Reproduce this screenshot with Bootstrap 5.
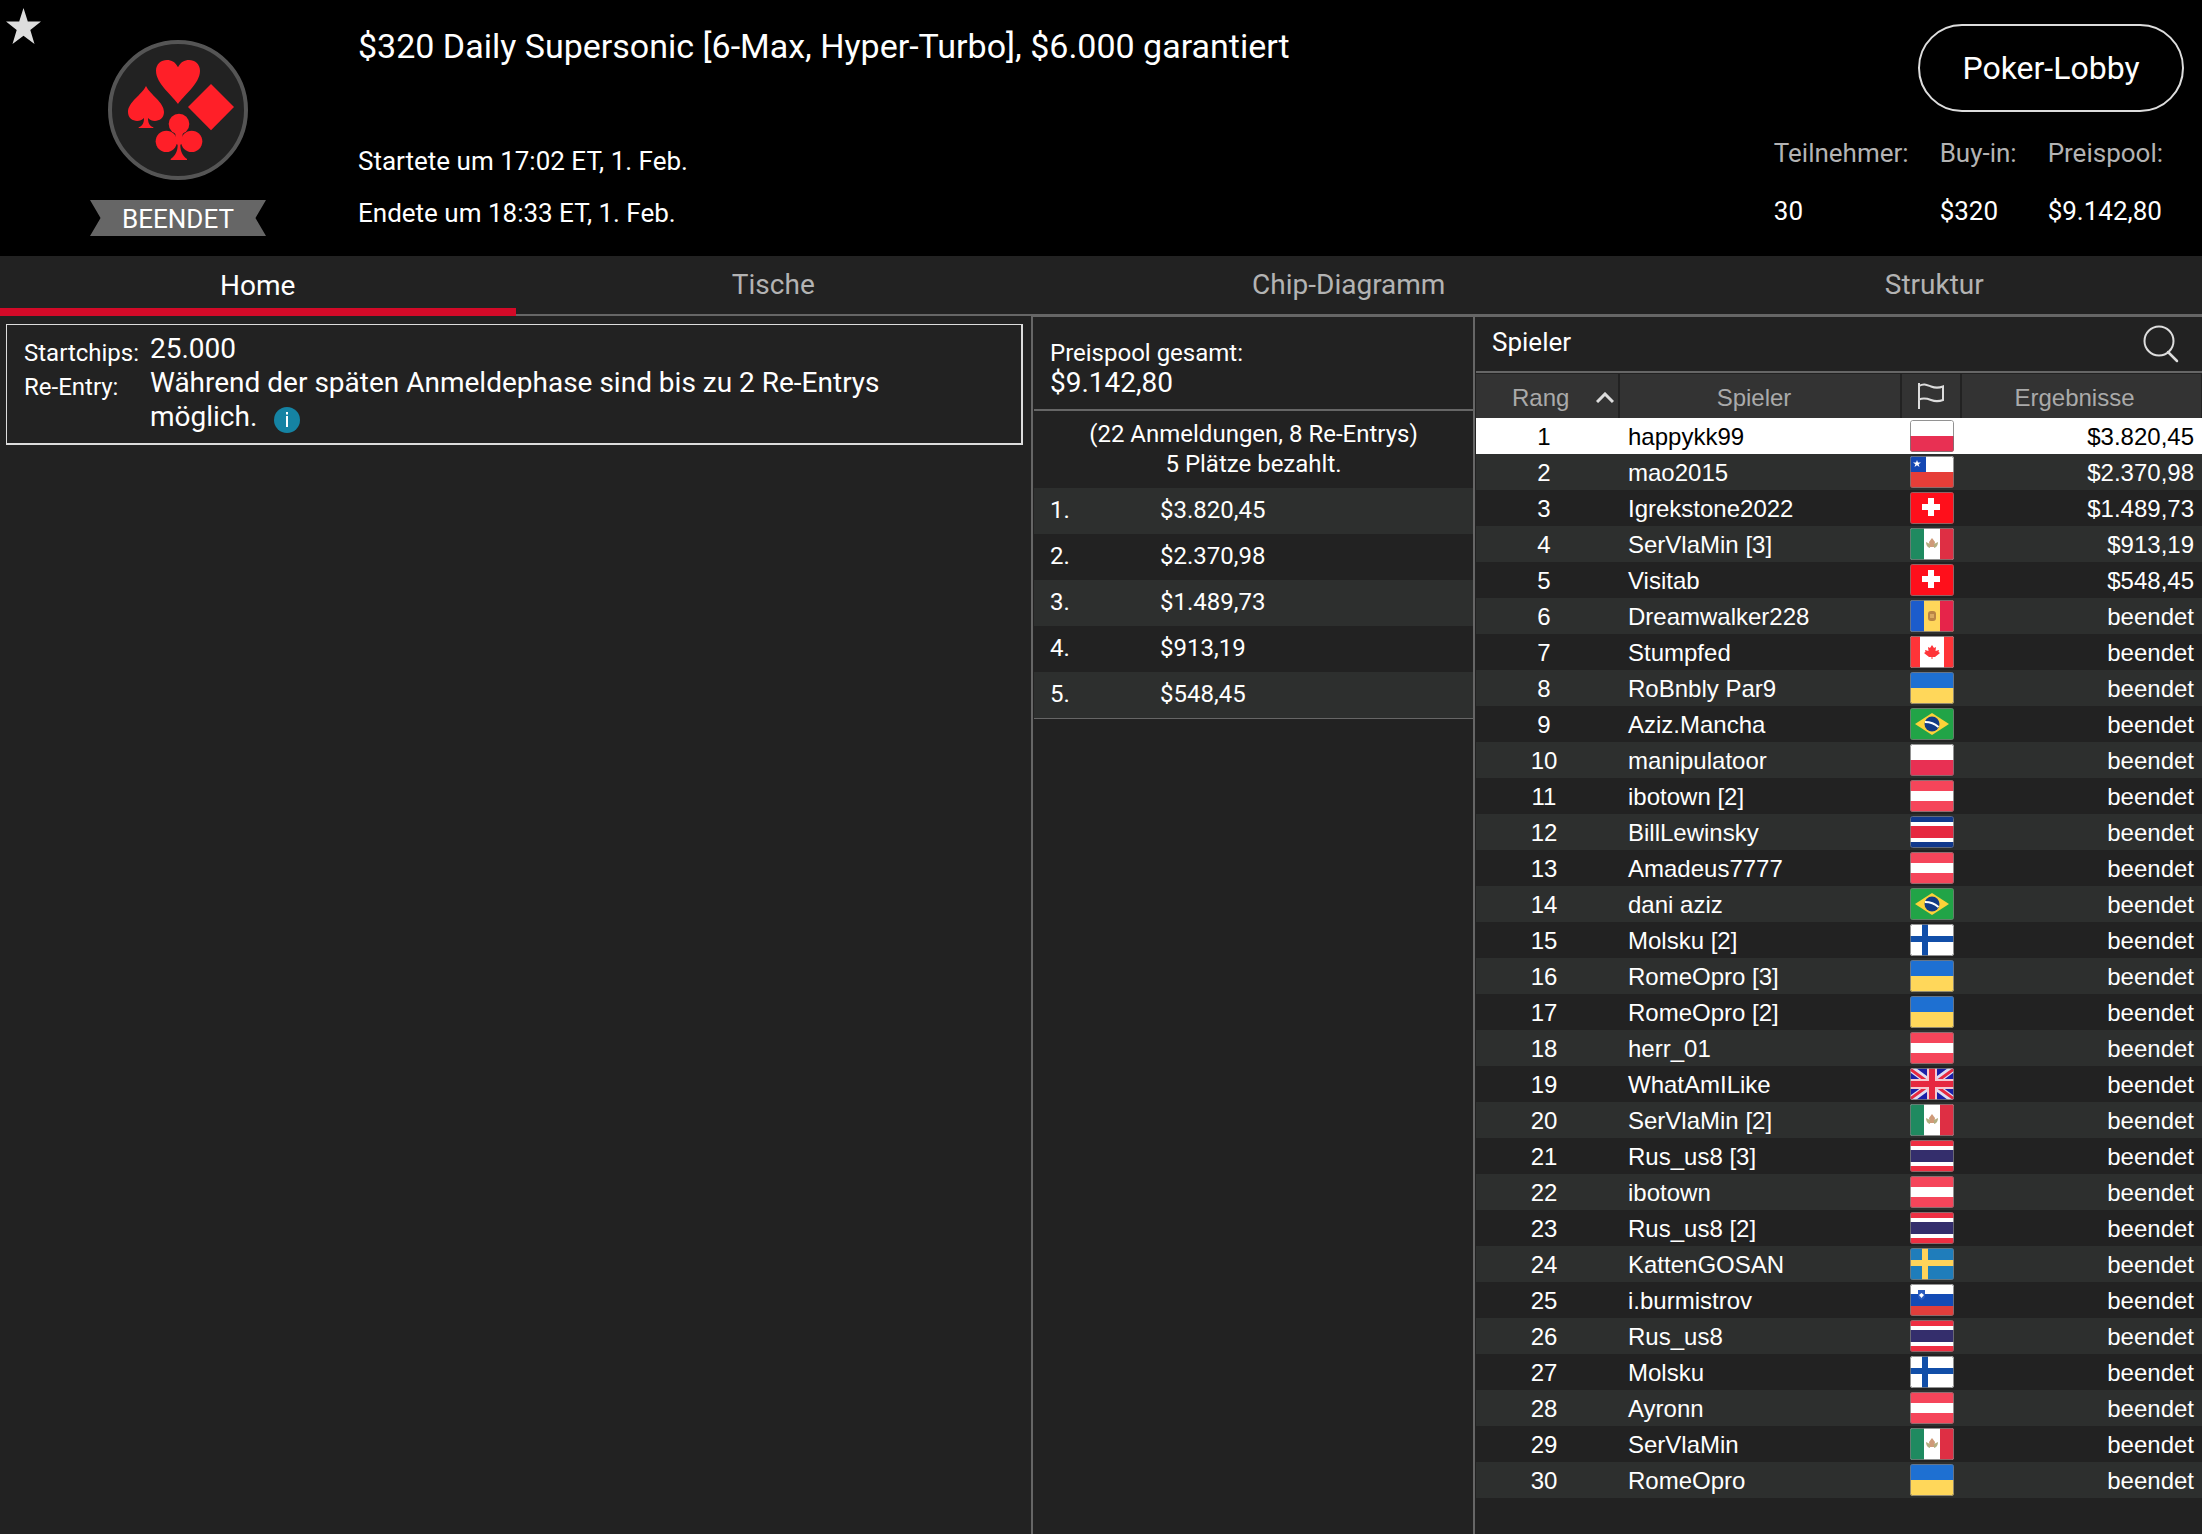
<!DOCTYPE html>
<html lang="de">
<head>
<meta charset="utf-8">
<meta name="viewport" content="width=device-width, initial-scale=1">
<title>Turnier-Lobby</title>
<link href="https://cdn.jsdelivr.net/npm/bootstrap@5.3.0/dist/css/bootstrap.min.css" rel="stylesheet">
<style>
  body { background: #222; color: #fff; font: 24px/30px Roboto, "Liberation Sans", sans-serif; }
  .icon-btn { background: none; border: 0; padding: 0; line-height: 0; color: #ddd; }
  .icon-btn svg, .suit-logo, .flag-pic { display: block; }

  /* Header */
  .lobby-head { background: #000; min-height: 256px; font-size: 26px; line-height: 32px; }
  .head-logo { width: 356px; padding-top: 40px; }
  .fav-btn { top: 8px; left: 6px; }
  .ribbon { width: 176px; height: 36px; margin-top: 20px; background: #666; line-height: 38px;
    clip-path: polygon(0 0, 100% 0, 94% 50%, 100% 100%, 0 100%, 6% 50%); }
  .head-info { padding: 26px 0 0 2px; }
  .head-title { font-size: 34px; line-height: 40px; font-weight: 400; margin-bottom: 79px; }
  .head-info p { margin-bottom: 20px; }
  .head-side { padding: 24px 18px 0 0; }
  .lobby-btn { width: 266px; height: 88px; border: 2px solid #ddd; font-size: 32px; color: #fff; background: #000; }
  .head-stats { gap: 31px; margin: 25px 21px 0 0; }
  .head-stats dt { font-weight: 400; color: #b3b3b3; margin-bottom: 26px; }

  /* Tabs */
  .lobby-tabs { border-bottom: 2px solid #666; flex-wrap: nowrap; }
  .lobby-tabs .nav-item { flex: 258 1 0; }
  .lobby-tabs .nav-item.grow-lg { flex-grow: 318; }
  .lobby-tabs .nav-item.grow-md { flex-grow: 268; }
  .lobby-tabs .nav-link { height: 58px; padding: 0; font-size: 28px; line-height: 58px; text-align: center; color: #b3b3b3; border-radius: 0; }
  .lobby-tabs .nav-link.active { height: 60px; line-height: 60px; margin-bottom: -2px; color: #fff; box-shadow: inset 0 -8px #d30a28; }

  /* Panels */
  .lobby-main { display: grid; grid-template-columns: minmax(0, 1fr) 442px 729px; }
  .info-box { margin: 8px 8px 0 6px; padding: 7px 16px 9px 17px; border: 1px solid #ddd; border-width: 1px 2px 2px 1px;
    display: grid; grid-template-columns: 126px 1fr; }
  .info-box dt { font-weight: 400; line-height: 26px; padding-top: 8px; }
  .info-box dd { margin: 0; padding-right: 96px; font-size: 28px; line-height: 34px; }
  .info-btn { margin-left: 10px; vertical-align: -7px; }
  .side-panel { border-left: 2px solid #666; border-top: 1px solid #666; padding-left: 1px; }
  .pool-total { padding: 21px 16px 11px; border-bottom: 2px solid #666; }
  .pool-total strong { font-weight: 400; font-size: 28px; }
  .pool-note { padding: 8px 0 9px; margin: 0; }
  .data-table { width: 100%; border-collapse: separate; border-spacing: 0; table-layout: fixed; }
  .payouts { border-bottom: 1px solid #666; }
  .payouts th { width: 126px; font-weight: 400; }
  .payouts th, .payouts td { padding: 0 0 2px 16px; line-height: 44px; }
  .payouts td { padding-left: 0; }
  .payouts tr:nth-child(odd) { background: #2d2f2e; }

  .players-head { height: 56px; padding: 0 23px 0 16px; border-bottom: 2px solid #666; margin-bottom: 1px; }
  .players-head h2 { font-size: 26px; line-height: 50px; padding-bottom: 4px; font-weight: 400; margin: 0; }
  .players { font-family: "Liberation Sans", Arial, sans-serif; }
  .players th { background: #333; color: #aaa; font-weight: 400; line-height: 41px; height: 44px; padding: 3px 12px 0 0; text-align: center; border-right: 2px solid #222; }
  .players th:last-child { border-right-width: 1px; padding-right: 14px; }
  .players th.icon-col { padding: 0; }
  .players th.icon-col svg { display: block; margin: auto; }
  .players th.sort-col { padding: 3px 4px 0 36px; }
  .sort-btn { background: none; border: 0; padding: 0; color: inherit; }
  .players td { height: 36px; line-height: 33px; padding: 2px 8px 1px; white-space: nowrap; }
  .players td:first-child { text-align: center; padding-right: 16px; }
  .players td:nth-child(3) { padding: 0; }
  .players td:last-child { text-align: right; }
  .players tbody tr:nth-child(even) { background: #2d2f2e; }
  .players tbody tr.picked { background: #fff; color: #000; }
  .flag-pic { width: 44px; height: 32px; margin: auto; border-radius: 3px; }
</style>
<script src="https://cdn.jsdelivr.net/npm/bootstrap@5.3.0/dist/js/bootstrap.bundle.min.js"></script>
</head>
<body class="min-vh-100 d-flex flex-column">

<svg width="0" height="0" class="position-absolute" aria-hidden="true">
  <defs>
    <g id="edge"><rect x=".5" y=".5" width="43" height="31" rx="2" fill="none" stroke="#777" stroke-opacity=".8"/></g>
    <symbol id="pl" viewBox="0 0 44 32"><path fill="#fff" d="M0 0h44v16H0z"/><path fill="#e83053" d="M0 16h44v16H0z"/><use href="#edge"/></symbol>
    <symbol id="cl" viewBox="0 0 44 32"><path fill="#fff" d="M0 0h44v16H0z"/><path fill="#e63e38" d="M0 16h44v16H0z"/><path fill="#1448b4" d="M0 0h16v16H0z"/><path fill="#fff" d="M7 4l1 2.500h3L8.600 8.200l.9 2.800L7 9.300 4.500 11l.9-2.800L3 6.500h3z"/><use href="#edge"/></symbol>
    <symbol id="ch" viewBox="0 0 44 32"><path fill="#ff0f1b" d="M0 0h44v32H0z"/><path fill="#fff" d="M18 6h6v6h6v6h-6v6h-6v-6h-6v-6h6z"/><use href="#edge"/></symbol>
    <symbol id="mx" viewBox="0 0 44 32"><path fill="#fff" d="M0 0h44v32H0z"/><path fill="#1f8a60" d="M0 0h14v32H0z"/><path fill="#de2f44" d="M30 0h14v32H30z"/><path fill="#cf9a78" d="M22 10l3 4-1 5h-4l-1-5z"/><path fill="#b3ae80" d="M16 14l4 2v4q-4-1-4-6zM28 14l-4 2v4q4-1 4-6z"/><use href="#edge"/></symbol>
    <symbol id="md" viewBox="0 0 44 32"><path fill="#ffd65a" d="M0 0h44v32H0z"/><path fill="#1c5ccc" d="M0 0h14v32H0z"/><path fill="#e6244a" d="M30 0h14v32H30z"/><rect x="18" y="11" width="8" height="10" rx="3" fill="#b98445"/><path fill="#d9a860" d="M20 14h4v4h-4z"/><use href="#edge"/></symbol>
    <symbol id="ca" viewBox="0 0 44 32"><path fill="#fff" d="M0 0h44v32H0z"/><path fill="#ff3438" d="M0 0h10v32H0zM34 0h10v32H34zM22 9l2 3 2-1-.5 4 3.500-1-.5 2 1.500 1-5 4h-2.500v2h-1v-2H19l-5-4 1.500-1-.5-2 3.500 1-.5-4 2 1z"/><use href="#edge"/></symbol>
    <symbol id="ua" viewBox="0 0 44 32"><path fill="#1e70d2" d="M0 0h44v16H0z"/><path fill="#ffd75a" d="M0 16h44v16H0z"/><use href="#edge"/></symbol>
    <symbol id="br" viewBox="0 0 44 32"><path fill="#21a447" d="M0 0h44v32H0z"/><path fill="#fbd239" d="M5 16L22 5l17 11-17 11z"/><circle cx="22" cy="16" r="7.500" fill="#143a84"/><path fill="none" stroke="#fff" stroke-width="2" d="M15 14q8 0 13.500 5"/><use href="#edge"/></symbol>
    <symbol id="at" viewBox="0 0 44 32"><path fill="#f5455a" d="M0 0h44v32H0z"/><path fill="#fff" d="M0 11h44v10H0z"/><use href="#edge"/></symbol>
    <symbol id="cr" viewBox="0 0 44 32"><path fill="#11398d" d="M0 0h44v32H0z"/><path fill="#fff" d="M0 6h44v20H0z"/><path fill="#e62840" d="M0 10h44v12H0z"/><use href="#edge"/></symbol>
    <symbol id="fi" viewBox="0 0 44 32"><path fill="#fff" d="M0 0h44v32H0z"/><path fill="#114ea8" d="M12 0h6v32h-6zM0 12h44v6H0z"/><use href="#edge"/></symbol>
    <symbol id="se" viewBox="0 0 44 32"><path fill="#1f7dbb" d="M0 0h44v32H0z"/><path fill="#ffd35a" d="M12 0h6v32h-6zM0 12h44v6H0z"/><use href="#edge"/></symbol>
    <symbol id="gb" viewBox="0 0 44 32"><path fill="#1a1fa8" d="M0 0h44v32H0z"/><path stroke="#fff" stroke-opacity=".85" stroke-width="7" d="M0 0l44 32M44 0L0 32"/><path stroke="#e62840" stroke-width="3" d="M0 1l22 16M44 1L22 17M0 31l22-16M44 31L22 15"/><path fill="#f6c8d0" d="M17 0h10v32H17zM0 11h44v10H0z"/><path fill="#e62840" d="M19 0h6v32h-6zM0 13h44v6H0z"/><use href="#edge"/></symbol>
    <symbol id="th" viewBox="0 0 44 32"><path fill="#ee2e42" d="M0 0h44v32H0z"/><path fill="#fff" d="M0 6h44v20H0z"/><path fill="#342e6c" d="M0 10h44v12H0z"/><use href="#edge"/></symbol>
    <symbol id="si" viewBox="0 0 44 32"><path fill="#fff" d="M0 0h44v10H0z"/><path fill="#134bb5" d="M0 10h44v12H0z"/><path fill="#e03e3b" d="M0 22h44v10H0z"/><path fill="#2a5cc0" d="M8 6h7v5q0 4-3.500 5Q8 15 8 11z"/><path fill="#fff" d="M9 11l2.500-2 2.500 2-2.500 3z"/><use href="#edge"/></symbol>
  </defs>
</svg>

<header class="lobby-head d-flex position-relative">
  <button class="icon-btn fav-btn position-absolute" type="button" aria-label="Favorit">
    <svg width="35" height="37" viewBox="0 0 35 37"><path fill="#ddd" d="M17.500 0l4.300 13.500H35L24.300 22l4.200 14-11-8.300L6.500 36l4.200-14L0 13.500h13.200z"/></svg>
  </button>
  <div class="head-logo d-flex flex-column align-items-center flex-shrink-0">
    <svg class="suit-logo" width="140" height="140" viewBox="84 30 420 420" aria-hidden="true">
      <circle cx="294" cy="240" r="204" fill="#222" stroke="#555" stroke-width="12"/>
      <g fill="#ff1f28">
        <path d="M294 222C280 198 228 162 228 122c0-38 52-44 66-10 14-34 66-28 66 10 0 40-52 76-66 100z"/>
        <path d="M393 162l69 69-69 70-69-70z"/>
        <path d="M198 168c12 26 54 48 54 78 0 28-34 34-48 18 0 14 4 24 16 28v2h-44v-2c12-4 16-14 16-28-14 16-48 10-48-18 0-30 42-52 54-78z"/>
        <circle cx="297" cy="282" r="31"/><circle cx="259" cy="334" r="32"/><circle cx="335" cy="334" r="32"/>
        <path d="M285 300h24l-2 22 10 14-16 8c0 20 6 32 20 43v3h-49v-3c14-11 21-23 21-43l-16-8 10-14z"/>
      </g>
    </svg>
    <div class="ribbon text-center">BEENDET</div>
  </div>
  <div class="head-info flex-grow-1">
    <h1 class="head-title">$320 Daily Supersonic [6-Max, Hyper-Turbo], $6.000 garantiert</h1>
    <p>Startete um 17:02 ET, 1. Feb.</p>
    <p class="mb-0">Endete um 18:33 ET, 1. Feb.</p>
  </div>
  <div class="head-side d-flex flex-column align-items-end">
    <button class="lobby-btn rounded-pill" type="button">Poker-Lobby</button>
    <div class="head-stats d-flex">
      <dl class="mb-0"><dt>Teilnehmer:</dt><dd class="mb-0">30</dd></dl>
      <dl class="mb-0"><dt>Buy-in:</dt><dd class="mb-0">$320</dd></dl>
      <dl class="mb-0"><dt>Preispool:</dt><dd class="mb-0">$9.142,80</dd></dl>
    </div>
  </div>
</header>

<nav aria-label="Turnier">
  <ul class="nav lobby-tabs">
    <li class="nav-item"><a class="nav-link active" aria-current="page" href="#home">Home</a></li>
    <li class="nav-item"><a class="nav-link" href="#tische">Tische</a></li>
    <li class="nav-item grow-lg"><a class="nav-link" href="#chips">Chip-Diagramm</a></li>
    <li class="nav-item grow-md"><a class="nav-link" href="#struktur">Struktur</a></li>
  </ul>
</nav>

<main class="lobby-main flex-grow-1" id="home">
  <section>
    <dl class="info-box mb-0">
      <dt>Startchips:</dt><dd>25.000</dd>
      <dt>Re-Entry:</dt>
      <dd>Während der späten Anmeldephase sind bis zu 2 Re-Entrys möglich.
        <button class="icon-btn info-btn" type="button" aria-label="Info"><svg width="26" height="26" viewBox="0 0 26 26"><circle cx="13" cy="13" r="13" fill="#1583a3"/><path fill="#fff" d="M12 5h2v2.500h-2zM12 9h2v11h-2z"/></svg></button>
      </dd>
    </dl>
  </section>

  <section class="side-panel">
    <div class="pool-total"><div>Preispool gesamt:</div><strong class="d-block">$9.142,80</strong></div>
    <p class="pool-note text-center">(22 Anmeldungen, 8 Re-Entrys)<br>5 Plätze bezahlt.</p>
    <table class="data-table payouts">
      <tbody>
        <tr><th scope="row">1.</th><td>$3.820,45</td></tr>
        <tr><th scope="row">2.</th><td>$2.370,98</td></tr>
        <tr><th scope="row">3.</th><td>$1.489,73</td></tr>
        <tr><th scope="row">4.</th><td>$913,19</td></tr>
        <tr><th scope="row">5.</th><td>$548,45</td></tr>
      </tbody>
    </table>
  </section>

  <section class="side-panel">
    <div class="players-head d-flex justify-content-between align-items-center">
      <h2>Spieler</h2>
      <button class="icon-btn" type="button" aria-label="Suchen"><svg width="36" height="38" viewBox="0 0 36 38" fill="none" stroke="#ddd" stroke-width="2"><circle cx="16" cy="16" r="14.500"/><path stroke-width="2.500" stroke-linecap="round" d="M25 27l9 9"/></svg></button>
    </div>
    <table class="data-table players">
      <colgroup><col style="width:144px"><col><col style="width:60px"><col style="width:240px"></colgroup>
      <thead>
        <tr>
          <th class="sort-col" scope="col" aria-sort="ascending"><button class="sort-btn d-flex w-100 justify-content-between align-items-center" type="button">Rang<svg width="18" height="11" viewBox="0 0 18 11" fill="none" stroke="#ddd" stroke-width="3"><path d="M1 10l8-8 8 8"/></svg></button></th>
          <th scope="col">Spieler</th>
          <th class="icon-col" scope="col" aria-label="Land"><svg width="28" height="28" viewBox="0 0 28 28" fill="none" stroke="#ddd" stroke-width="2"><path d="M2 1v26M2 4c5-3 8-1 12 .5s8 1.500 12 0v13.500c-4 1.500-8 1.500-12 0s-7-2.500-12-.5"/></svg></th>
          <th scope="col">Ergebnisse</th>
        </tr>
      </thead>
      <tbody>
        <tr class="picked"><td>1</td><td>happykk99</td><td><svg class="flag-pic"><use href="#pl"/></svg></td><td>$3.820,45</td></tr>
        <tr><td>2</td><td>mao2015</td><td><svg class="flag-pic"><use href="#cl"/></svg></td><td>$2.370,98</td></tr>
        <tr><td>3</td><td>Igrekstone2022</td><td><svg class="flag-pic"><use href="#ch"/></svg></td><td>$1.489,73</td></tr>
        <tr><td>4</td><td>SerVlaMin [3]</td><td><svg class="flag-pic"><use href="#mx"/></svg></td><td>$913,19</td></tr>
        <tr><td>5</td><td>Visitab</td><td><svg class="flag-pic"><use href="#ch"/></svg></td><td>$548,45</td></tr>
        <tr><td>6</td><td>Dreamwalker228</td><td><svg class="flag-pic"><use href="#md"/></svg></td><td>beendet</td></tr>
        <tr><td>7</td><td>Stumpfed</td><td><svg class="flag-pic"><use href="#ca"/></svg></td><td>beendet</td></tr>
        <tr><td>8</td><td>RoBnbly Par9</td><td><svg class="flag-pic"><use href="#ua"/></svg></td><td>beendet</td></tr>
        <tr><td>9</td><td>Aziz.Mancha</td><td><svg class="flag-pic"><use href="#br"/></svg></td><td>beendet</td></tr>
        <tr><td>10</td><td>manipulatoor</td><td><svg class="flag-pic"><use href="#pl"/></svg></td><td>beendet</td></tr>
        <tr><td>11</td><td>ibotown [2]</td><td><svg class="flag-pic"><use href="#at"/></svg></td><td>beendet</td></tr>
        <tr><td>12</td><td>BillLewinsky</td><td><svg class="flag-pic"><use href="#cr"/></svg></td><td>beendet</td></tr>
        <tr><td>13</td><td>Amadeus7777</td><td><svg class="flag-pic"><use href="#at"/></svg></td><td>beendet</td></tr>
        <tr><td>14</td><td>dani aziz</td><td><svg class="flag-pic"><use href="#br"/></svg></td><td>beendet</td></tr>
        <tr><td>15</td><td>Molsku [2]</td><td><svg class="flag-pic"><use href="#fi"/></svg></td><td>beendet</td></tr>
        <tr><td>16</td><td>RomeOpro [3]</td><td><svg class="flag-pic"><use href="#ua"/></svg></td><td>beendet</td></tr>
        <tr><td>17</td><td>RomeOpro [2]</td><td><svg class="flag-pic"><use href="#ua"/></svg></td><td>beendet</td></tr>
        <tr><td>18</td><td>herr_01</td><td><svg class="flag-pic"><use href="#at"/></svg></td><td>beendet</td></tr>
        <tr><td>19</td><td>WhatAmILike</td><td><svg class="flag-pic"><use href="#gb"/></svg></td><td>beendet</td></tr>
        <tr><td>20</td><td>SerVlaMin [2]</td><td><svg class="flag-pic"><use href="#mx"/></svg></td><td>beendet</td></tr>
        <tr><td>21</td><td>Rus_us8 [3]</td><td><svg class="flag-pic"><use href="#th"/></svg></td><td>beendet</td></tr>
        <tr><td>22</td><td>ibotown</td><td><svg class="flag-pic"><use href="#at"/></svg></td><td>beendet</td></tr>
        <tr><td>23</td><td>Rus_us8 [2]</td><td><svg class="flag-pic"><use href="#th"/></svg></td><td>beendet</td></tr>
        <tr><td>24</td><td>KattenGOSAN</td><td><svg class="flag-pic"><use href="#se"/></svg></td><td>beendet</td></tr>
        <tr><td>25</td><td>i.burmistrov</td><td><svg class="flag-pic"><use href="#si"/></svg></td><td>beendet</td></tr>
        <tr><td>26</td><td>Rus_us8</td><td><svg class="flag-pic"><use href="#th"/></svg></td><td>beendet</td></tr>
        <tr><td>27</td><td>Molsku</td><td><svg class="flag-pic"><use href="#fi"/></svg></td><td>beendet</td></tr>
        <tr><td>28</td><td>Ayronn</td><td><svg class="flag-pic"><use href="#at"/></svg></td><td>beendet</td></tr>
        <tr><td>29</td><td>SerVlaMin</td><td><svg class="flag-pic"><use href="#mx"/></svg></td><td>beendet</td></tr>
        <tr><td>30</td><td>RomeOpro</td><td><svg class="flag-pic"><use href="#ua"/></svg></td><td>beendet</td></tr>
      </tbody>
    </table>
  </section>
</main>
</body>
</html>
